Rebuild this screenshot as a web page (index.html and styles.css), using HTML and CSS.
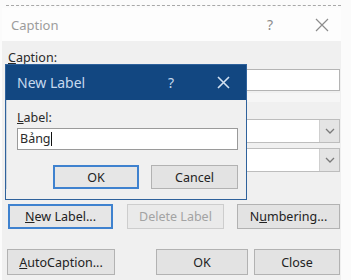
FILE: index.html
```html
<!DOCTYPE html>
<html lang="vi">

<head>
    <meta charset="UTF-8">
    <title>Caption</title>
    <link rel="stylesheet" href="styles.css">
</head>

<body>

    <div class="rule"></div>

    <div class="caption-dialog">
        <div class="titlebar">
            <span class="title">Caption</span>
            <span class="help">?</span>
            <span class="close">
                <svg width="14" height="14" viewBox="0 0 14 14"><path d="M1 1L13 13M13 1L1 13" stroke="#8c8c8c" stroke-width="1.2" fill="none"/></svg>
            </span>
        </div>
        <div class="dlg-body">
            <div class="lbl"><u>C</u>aption:</div>
            <div class="field"></div>
            <div class="band"></div>

            <!-- las etiquetas quedan tapadas por el dialogo -->
            <div class="combo-row top">
                <span class="spacer"></span>
                <div class="combo">
                    <div class="combo-text"></div>
                    <div class="combo-btn">
                        <svg width="10" height="6" viewBox="0 0 10 6"><path d="M1 1L5 5L9 1" stroke="#7a7a7a" stroke-width="1.3" fill="none"/></svg>
                    </div>
                </div>
            </div>
            <div class="combo-row">
                <span class="spacer"></span>
                <div class="combo">
                    <div class="combo-text"></div>
                    <div class="combo-btn">
                        <svg width="10" height="6" viewBox="0 0 10 6"><path d="M1 1L5 5L9 1" stroke="#7a7a7a" stroke-width="1.3" fill="none"/></svg>
                    </div>
                </div>
            </div>

            <div class="btn-row first">
                <button class="btn focus w-new"><u>N</u>ew Label...</button>
                <button class="btn disabled w-del">Delete Label</button>
                <button class="btn w-num">N<u>u</u>mbering...</button>
            </div>
            <div class="btn-row second">
                <button class="btn w-auto"><u>A</u>utoCaption...</button>
                <button class="btn w-ok push">OK</button>
                <button class="btn w-close">Close</button>
            </div>
        </div>
    </div>

    <!-- dialogo encima -->
    <div class="new-label">
        <div class="nl-titlebar">
            <span class="nl-title">New Label</span>
            <span class="nl-help">?</span>
            <span class="nl-close">
                <svg width="13" height="13" viewBox="0 0 13 13"><path d="M1 1L12 12M12 1L1 12" stroke="#d3e2f2" stroke-width="1.6" fill="none"/></svg>
            </span>
        </div>
        <div class="nl-body">
            <div class="lbl"><u>L</u>abel:</div>
            <div class="nl-input">Bảng<span class="caret"></span></div>
            <div class="nl-buttons">
                <button class="btn focus w-nl">OK</button>
                <button class="btn w-nl2">Cancel</button>
            </div>
        </div>
    </div>

</body>

</html>
```

FILE: styles.css
```css
body {
    margin: 0;
    width: 351px;
    height: 280px;
    overflow: hidden;
    background: #fbfbfb;
    font-family: "Noto Sans", "Open Sans", sans-serif;
    font-size: 12.5px;
    color: #2a2a2a;
    position: relative;
}

.rule {
    margin: 5px 10px 2px 6px;
    border-top: 1px dashed #a8a8a8;
}

.caption-dialog {
    margin-left: 2px;
    width: 339px;
}

.titlebar {
    height: 33px;
    background: #fdfdfd;
    display: flex;
    align-items: center;
}

.title {
    margin-left: 9px;
    font-size: 13px;
    color: #9c9c9c;
}

.help {
    margin-left: auto;
    font-size: 14px;
    color: #8c8c8c;
}

.close {
    margin-left: 42px;
    margin-right: 12px;
    display: flex;
}

.dlg-body {
    background: #f0f0f0;
    padding: 9px 1px 6px 6px;
    height: 224px;
}

.lbl {
    line-height: 16px;
}

.field {
    margin-top: 3px;
    height: 20px;
    background: #fff;
    border: 1px solid #b4b4b4;
}

.band {
    margin-top: 2px;
    height: 9px;
    background: #f6f6f6;
}

.combo-row {
    display: flex;
    align-items: center;
    margin-top: 5px;
}

.combo-row.top {
    margin-top: 17px;
}

.spacer {
    width: 62px;
}

.combo {
    flex: 1;
    height: 22px;
    display: flex;
    border: 1px solid #bdbdbd;
    background: #fff;
}

.combo-text {
    flex: 1;
}

.combo-btn {
    width: 19px;
    background: #e4e4e4;
    border-left: 1px solid #cfcfcf;
    display: flex;
    align-items: center;
    justify-content: center;
}

.btn-row {
    display: flex;
    align-items: center;
}

.btn-row.first {
    margin-top: 32px;
}

.btn-row.second {
    margin-top: 20px;
    margin-left: -1px;
}

.btn {
    font-family: inherit;
    font-size: 12.5px;
    color: #222;
    background: #e3e3e3;
    border: 1px solid #b2b2b2;
    height: 25px;
    padding: 0;
}

.btn.focus {
    border: 2px solid #3f82cf;
    background: #e6e6e6;
}

.btn.disabled {
    color: #a3a3a3;
    background: #eaeaea;
    border-color: #cdcdcd;
}

.w-new { width: 105px; }
.w-del { width: 97px; margin-left: 14px; }
.w-num { width: 103px; margin-left: 13px; }
.w-auto { width: 108px; height: 26px; }
.w-ok { width: 92px; height: 26px; }
.w-close { width: 86px; height: 26px; margin-left: 6px; }

.push {
    margin-left: auto;
}

/* New Label */
.new-label {
    position: absolute;
    left: 5px;
    top: 64px;
    width: 242px;
    height: 136px;
    box-sizing: border-box;
    border: 1px solid #2f629c;
    background: #f0f0f0;
    display: flex;
    flex-direction: column;
}

.nl-titlebar {
    height: 35px;
    background: #124781;
    display: flex;
    align-items: center;
    flex-shrink: 0;
}

.nl-title {
    margin-left: 11px;
    font-size: 14px;
    color: #c6d9ee;
}

.nl-help {
    margin-left: auto;
    font-size: 14px;
    color: #c6d9ee;
}

.nl-close {
    margin-left: 43px;
    margin-right: 16px;
    display: flex;
}

.nl-body {
    padding: 10px 8px 0 10px;
    border-left: 1px solid #c9d3de;
}

.nl-input {
    margin-top: 2px;
    height: 20px;
    line-height: 20px;
    background: #fff;
    border: 1px solid #9a9a9a;
    padding-left: 2px;
}

.caret {
    display: inline-block;
    width: 1px;
    height: 14px;
    background: #111;
    vertical-align: -3px;
}

.nl-buttons {
    display: flex;
    justify-content: flex-end;
    margin-top: 15px;
}

.w-nl { width: 86px; height: 24px; }
.w-nl2 { width: 87px; height: 24px; margin-left: 12px; }
```
